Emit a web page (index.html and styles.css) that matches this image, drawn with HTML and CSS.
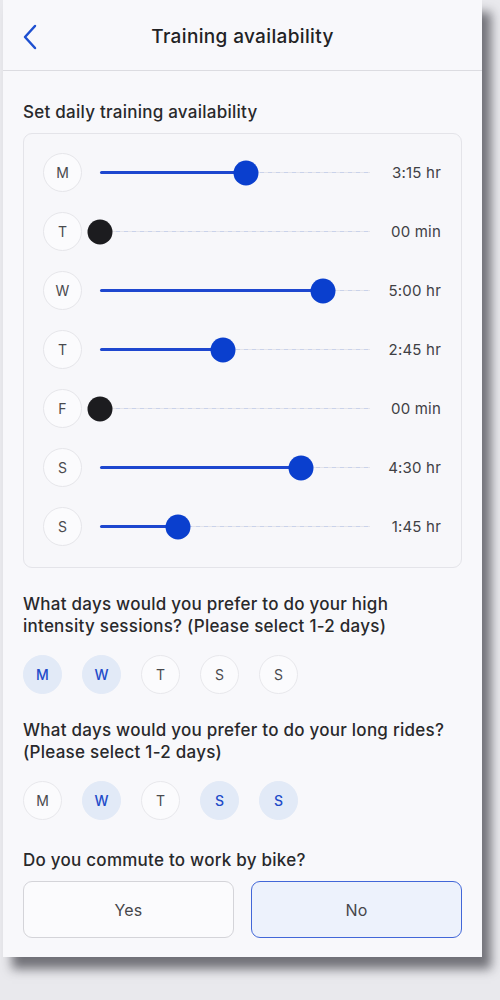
FILE: index.html
```html
<!DOCTYPE html>
<html lang="en">
<head>
<meta charset="utf-8">
<title>Training availability</title>
<link rel="stylesheet" href="styles.css">
</head>
<body>
<div class="screen">
  <header class="topbar">
    <button class="back" aria-label="Back">
      <svg width="16" height="26" viewBox="0 0 16 26"><path d="M13 2 L3 13 L13 24" fill="none" stroke="#1d4fd0" stroke-width="2.5" stroke-linecap="round" stroke-linejoin="round"/></svg>
    </button>
    <h1 class="title">Training availability</h1>
  </header>

  <main class="content">
    <h2 class="section-title">Set daily training availability</h2>
    <div class="card">
      <div class="row">
        <span class="day">M</span>
        <div class="track"><div class="fill" style="width:54.2%"></div><span class="thumb" style="left:54.2%"></span></div>
        <span class="value">3:15 hr</span>
      </div>
      <div class="row">
        <span class="day">T</span>
        <div class="track"><div class="fill" style="width:0%"></div><span class="thumb off" style="left:0%"></span></div>
        <span class="value">00 min</span>
      </div>
      <div class="row">
        <span class="day">W</span>
        <div class="track"><div class="fill" style="width:82.6%"></div><span class="thumb" style="left:82.6%"></span></div>
        <span class="value">5:00 hr</span>
      </div>
      <div class="row">
        <span class="day">T</span>
        <div class="track"><div class="fill" style="width:45.5%"></div><span class="thumb" style="left:45.5%"></span></div>
        <span class="value">2:45 hr</span>
      </div>
      <div class="row">
        <span class="day">F</span>
        <div class="track"><div class="fill" style="width:0%"></div><span class="thumb off" style="left:0%"></span></div>
        <span class="value">00 min</span>
      </div>
      <div class="row">
        <span class="day">S</span>
        <div class="track"><div class="fill" style="width:74.5%"></div><span class="thumb" style="left:74.5%"></span></div>
        <span class="value">4:30 hr</span>
      </div>
      <div class="row">
        <span class="day">S</span>
        <div class="track"><div class="fill" style="width:29%"></div><span class="thumb" style="left:29%"></span></div>
        <span class="value">1:45 hr</span>
      </div>
    </div>

    <h2 class="question">What days would you prefer to do your high intensity sessions? (Please select 1-2 days)</h2>
    <div class="chips">
      <span class="chip on">M</span>
      <span class="chip on">W</span>
      <span class="chip">T</span>
      <span class="chip">S</span>
      <span class="chip">S</span>
    </div>

    <h2 class="question">What days would you prefer to do your long rides? (Please select 1-2 days)</h2>
    <div class="chips">
      <span class="chip">M</span>
      <span class="chip on">W</span>
      <span class="chip">T</span>
      <span class="chip on">S</span>
      <span class="chip on">S</span>
    </div>

    <h2 class="question single">Do you commute to work by bike?</h2>
    <div class="choices">
      <button class="choice">Yes</button>
      <button class="choice on">No</button>
    </div>
  </main>
</div>
</body>
</html>
```

FILE: styles.css
```css
* { box-sizing: border-box; }

html, body {
  margin: 0;
  padding: 0;
}

body {
  background: #e9e9ed;
  font-family: Inter, "Noto Sans", "Liberation Sans", sans-serif;
  color: #262628;
  width: 500px;
  height: 1000px;
  overflow: hidden;
}

.screen {
  margin-left: 3px;
  width: 479px;
  height: 957px;
  background: #f8f8fb;
  box-shadow: 9px 12px 10px rgba(50, 50, 58, 0.65);
  display: flex;
  flex-direction: column;
}

.topbar {
  height: 71px;
  padding-top: 2px;
  border-bottom: 1px solid #dcdce1;
  display: flex;
  align-items: center;
  justify-content: center;
  position: relative;
}

.back {
  position: absolute;
  left: 17px;
  top: 23px;
  border: 0;
  background: none;
  padding: 0;
  width: 20px;
  height: 28px;
  display: flex;
  align-items: center;
  justify-content: center;
}

.title {
  margin: 0;
  font-size: 19px;
  font-weight: 500;
  letter-spacing: 0.35px;
  color: #222224;
}

.content {
  padding: 30px 20px 0 20px;
}

.section-title,
.question {
  margin: 0;
  font-size: 17px;
  font-weight: 500;
  letter-spacing: 0.25px;
  line-height: 22px;
  color: #29292b;
}

.card {
  margin-top: 10px;
  border: 1px solid #e4e4e9;
  border-radius: 9px;
  background: #f7f7fa;
  padding: 19px 20px 21px 19px;
  display: flex;
  flex-direction: column;
  gap: 20px;
}

.row {
  display: flex;
  align-items: center;
  height: 39px;
}

.day {
  width: 39px;
  height: 39px;
  flex: none;
  border-radius: 50%;
  border: 1px solid #e6e6ea;
  background: #fbfbfd;
  display: flex;
  align-items: center;
  justify-content: center;
  font-size: 14px;
  color: #4a4a4e;
}

.track {
  position: relative;
  flex: 1;
  margin-left: 18px;
  height: 3px;
  background-image: linear-gradient(to right, #c9d2ea 50%, #e4e4ea 50%);
  background-size: 8px 1px;
  background-repeat: repeat-x;
  background-position: 0 1px;
}

.fill {
  height: 3px;
  background: #1e47cf;
  border-radius: 2px;
}

.thumb {
  position: absolute;
  top: 50%;
  width: 25px;
  height: 25px;
  border-radius: 50%;
  background: #0a3fce;
  transform: translate(-50%, -50%);
}

.thumb.off {
  background: #1c1c1f;
}

.value {
  width: 71px;
  flex: none;
  text-align: right;
  font-size: 15px;
  letter-spacing: 0.2px;
  color: #404044;
}

.question {
  margin-top: 25px;
}

.chips {
  display: flex;
  gap: 20px;
  margin-top: 18px;
}

.chip {
  width: 39px;
  height: 39px;
  border-radius: 50%;
  border: 1px solid #e8e8ec;
  background: #fbfbfd;
  display: flex;
  align-items: center;
  justify-content: center;
  font-size: 14px;
  color: #4a4a4e;
}

.chip.on {
  background: #e2eaf7;
  border-color: #e2eaf7;
  color: #1f4cc9;
  font-weight: 500;
}

.question.single {
  margin-top: 29px;
}

.choices {
  display: grid;
  grid-template-columns: 1fr 1fr;
  gap: 17px;
  margin-top: 10px;
}

.choice {
  height: 57px;
  border-radius: 9px;
  border: 1px solid #d4d4d9;
  background: #fbfbfd;
  font-family: inherit;
  font-size: 16px;
  letter-spacing: 0.2px;
  color: #46464a;
}

.choice.on {
  border: 1.5px solid #4267d8;
  background: #edf2fc;
}
```
